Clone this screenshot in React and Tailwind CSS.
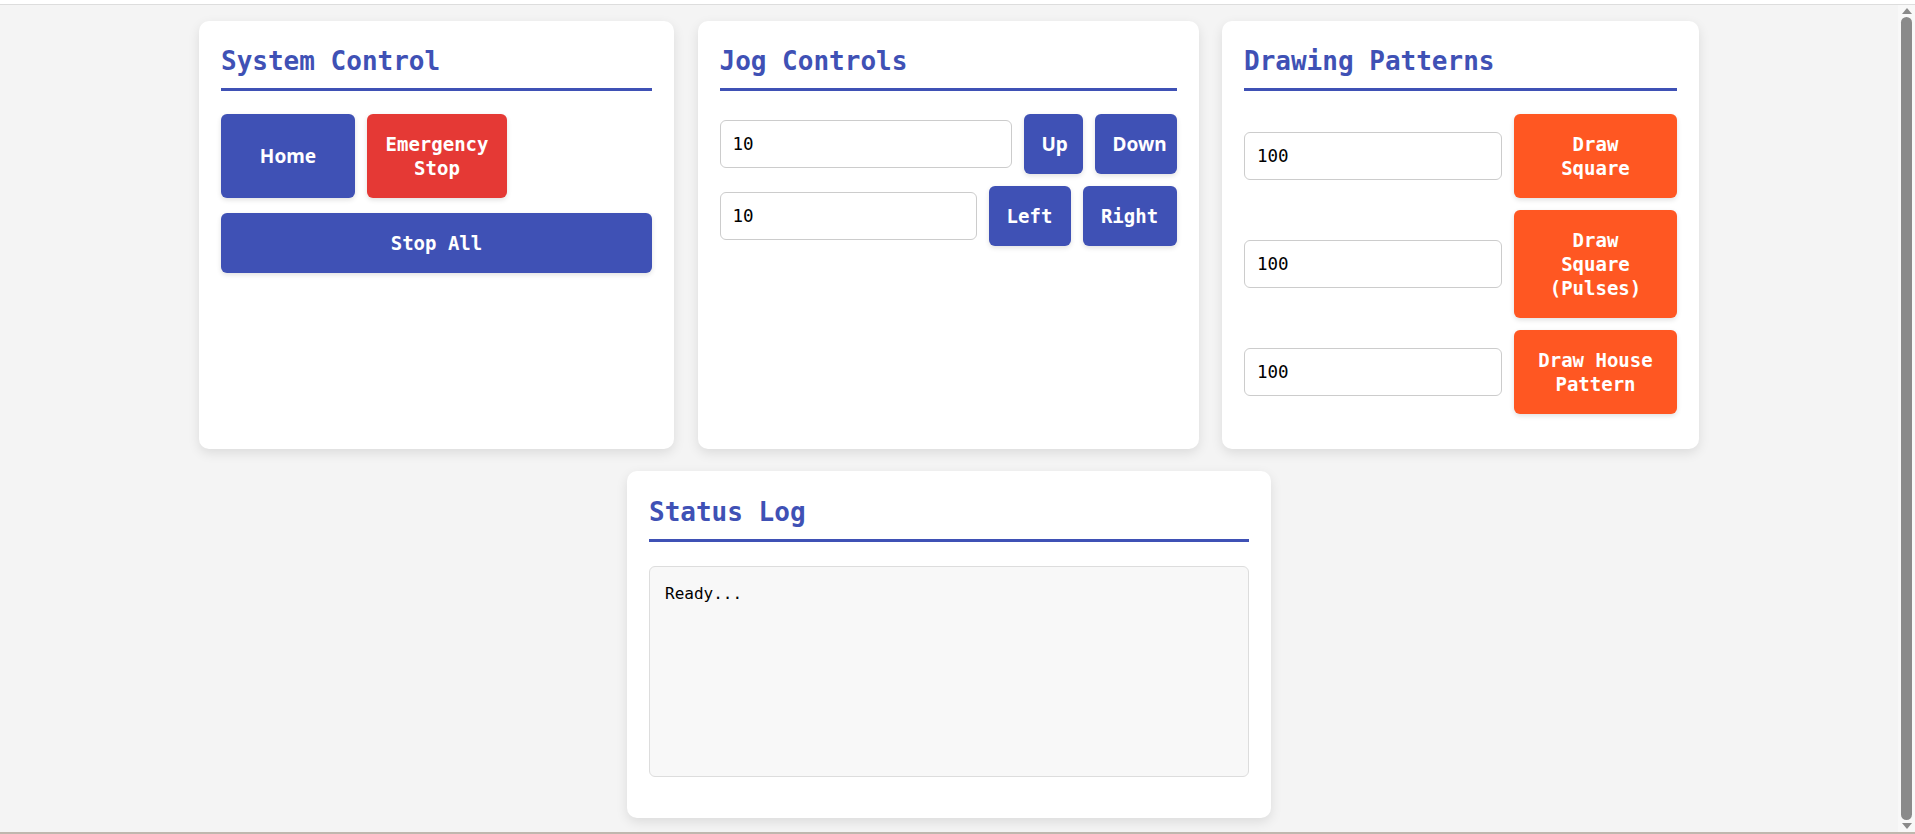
import { useState } from "react";

const mono = "font-['DejaVu_Sans_Mono','Liberation_Mono',monospace]";
const sans = "font-['Noto_Sans','Open_Sans',sans-serif]";

function Card({ title, className = "", children }) {
  return (
    <div
      className={`bg-white rounded-[10px] shadow-[0_4px_12px_rgba(0,0,0,0.1)] ${className}`}
    >
      <h2
        className={`${mono} font-bold text-[26px] leading-[31px] text-[#3f51b5] pb-[11px] border-b-[3px] border-[#3f51b5]`}
      >
        {title}
      </h2>
      {children}
    </div>
  );
}

function Btn({ children, color = "blue", font = mono, className = "" }) {
  const bg = color === "red" ? "bg-[#e53935]" : color === "orange" ? "bg-[#ff5722]" : "bg-[#3f51b5]";
  return (
    <button
      className={`${bg} ${font} text-white font-bold text-[19px] leading-[24px] py-[18px] px-[18px] rounded-[6px] shadow-[0_2px_5px_rgba(0,0,0,0.12)] text-center ${className}`}
    >
      {children}
    </button>
  );
}

function NumInput({ value, className = "" }) {
  const [v, setV] = useState(value);
  return (
    <input
      type="text"
      value={v}
      onChange={(e) => setV(e.target.value)}
      className={`${mono} h-[48px] min-w-0 border border-[#cccccc] rounded-[6px] px-[12px] text-[17.5px] text-black bg-white outline-none ${className}`}
    />
  );
}

export default function App() {
  return (
    <div className="h-[834px] w-full flex flex-col bg-[#f4f4f4] overflow-hidden">
      <div className="h-[5px] shrink-0 bg-white border-b border-[#dddddd]" />
      <div className="flex-1 flex min-h-0">
        {/* ── Main ── */}
        <div className="flex-1 pt-[16px]">
          <div className="w-[1500px] mx-auto">
            <div className="flex justify-between items-stretch">
              {/* System Control */}
              <Card title="System Control" className="w-[475px] pt-[25px] px-[22px]">
                <div className="flex gap-[12px] mt-[23px]">
                  <Btn font={sans} className="w-[134px]">Home</Btn>
                  <Btn color="red" className="w-[140px]">
                    Emergency
                    <br />
                    Stop
                  </Btn>
                </div>
                <Btn className="w-full mt-[15px]">Stop All</Btn>
              </Card>

              {/* Jog Controls */}
              <Card title="Jog Controls" className="w-[501px] pt-[25px] px-[22px]">
                <div className="flex flex-col gap-[12px] mt-[23px]">
                  <div className="flex items-center gap-[12px]">
                    <NumInput value="10" className="flex-1" />
                    <Btn font={sans} className="w-[59px] px-0">Up</Btn>
                    <Btn font={sans} className="w-[82px] px-0">Down</Btn>
                  </div>
                  <div className="flex items-center gap-[12px]">
                    <NumInput value="10" className="flex-1" />
                    <Btn className="w-[82px] px-0">Left</Btn>
                    <Btn className="w-[94px] px-0">Right</Btn>
                  </div>
                </div>
              </Card>

              {/* Drawing Patterns */}
              <Card title="Drawing Patterns" className="w-[477px] pt-[25px] px-[22px] pb-[35px]">
                <div className="flex flex-col gap-[12px] mt-[23px]">
                  <div className="flex items-center gap-[12px]">
                    <NumInput value="100" className="flex-1" />
                    <Btn color="orange" className="w-[163px] px-0">
                      Draw
                      <br />
                      Square
                    </Btn>
                  </div>
                  <div className="flex items-center gap-[12px]">
                    <NumInput value="100" className="flex-1" />
                    <Btn color="orange" className="w-[163px] px-0">
                      Draw
                      <br />
                      Square
                      <br />
                      (Pulses)
                    </Btn>
                  </div>
                  <div className="flex items-center gap-[12px]">
                    <NumInput value="100" className="flex-1" />
                    <Btn color="orange" className="w-[163px] px-0">
                      Draw House
                      <br />
                      Pattern
                    </Btn>
                  </div>
                </div>
              </Card>
            </div>

            {/* Status Log */}
            <div className="flex justify-center mt-[22px]">
              <Card title="Status Log" className="w-[644px] pt-[26px] px-[22px] pb-[41px]">
                <div
                  className={`${mono} mt-[24px] h-[211px] bg-[#f8f8f8] border border-[#dddddd] rounded-[6px] px-[15px] py-[15px] text-[16px] leading-[24px] text-black`}
                >
                  Ready...
                </div>
              </Card>
            </div>
          </div>
        </div>

        {/* ── Scrollbar ── */}
        <div className="w-[17px] shrink-0 bg-[#f8f8f8] flex flex-col items-center py-[3px] gap-[3px]">
          <div className="w-0 h-0 border-l-[5px] border-r-[5px] border-b-[6px] border-l-transparent border-r-transparent border-b-[#8a8a8a]" />
          <div className="flex-1 w-[11px] rounded-full bg-[#8a8a8a]" />
          <div className="w-0 h-0 border-l-[5px] border-r-[5px] border-t-[6px] border-l-transparent border-r-transparent border-t-[#8a8a8a]" />
        </div>
      </div>
      <div className="h-[2px] shrink-0 bg-[#bfb7ae]" />
    </div>
  );
}
